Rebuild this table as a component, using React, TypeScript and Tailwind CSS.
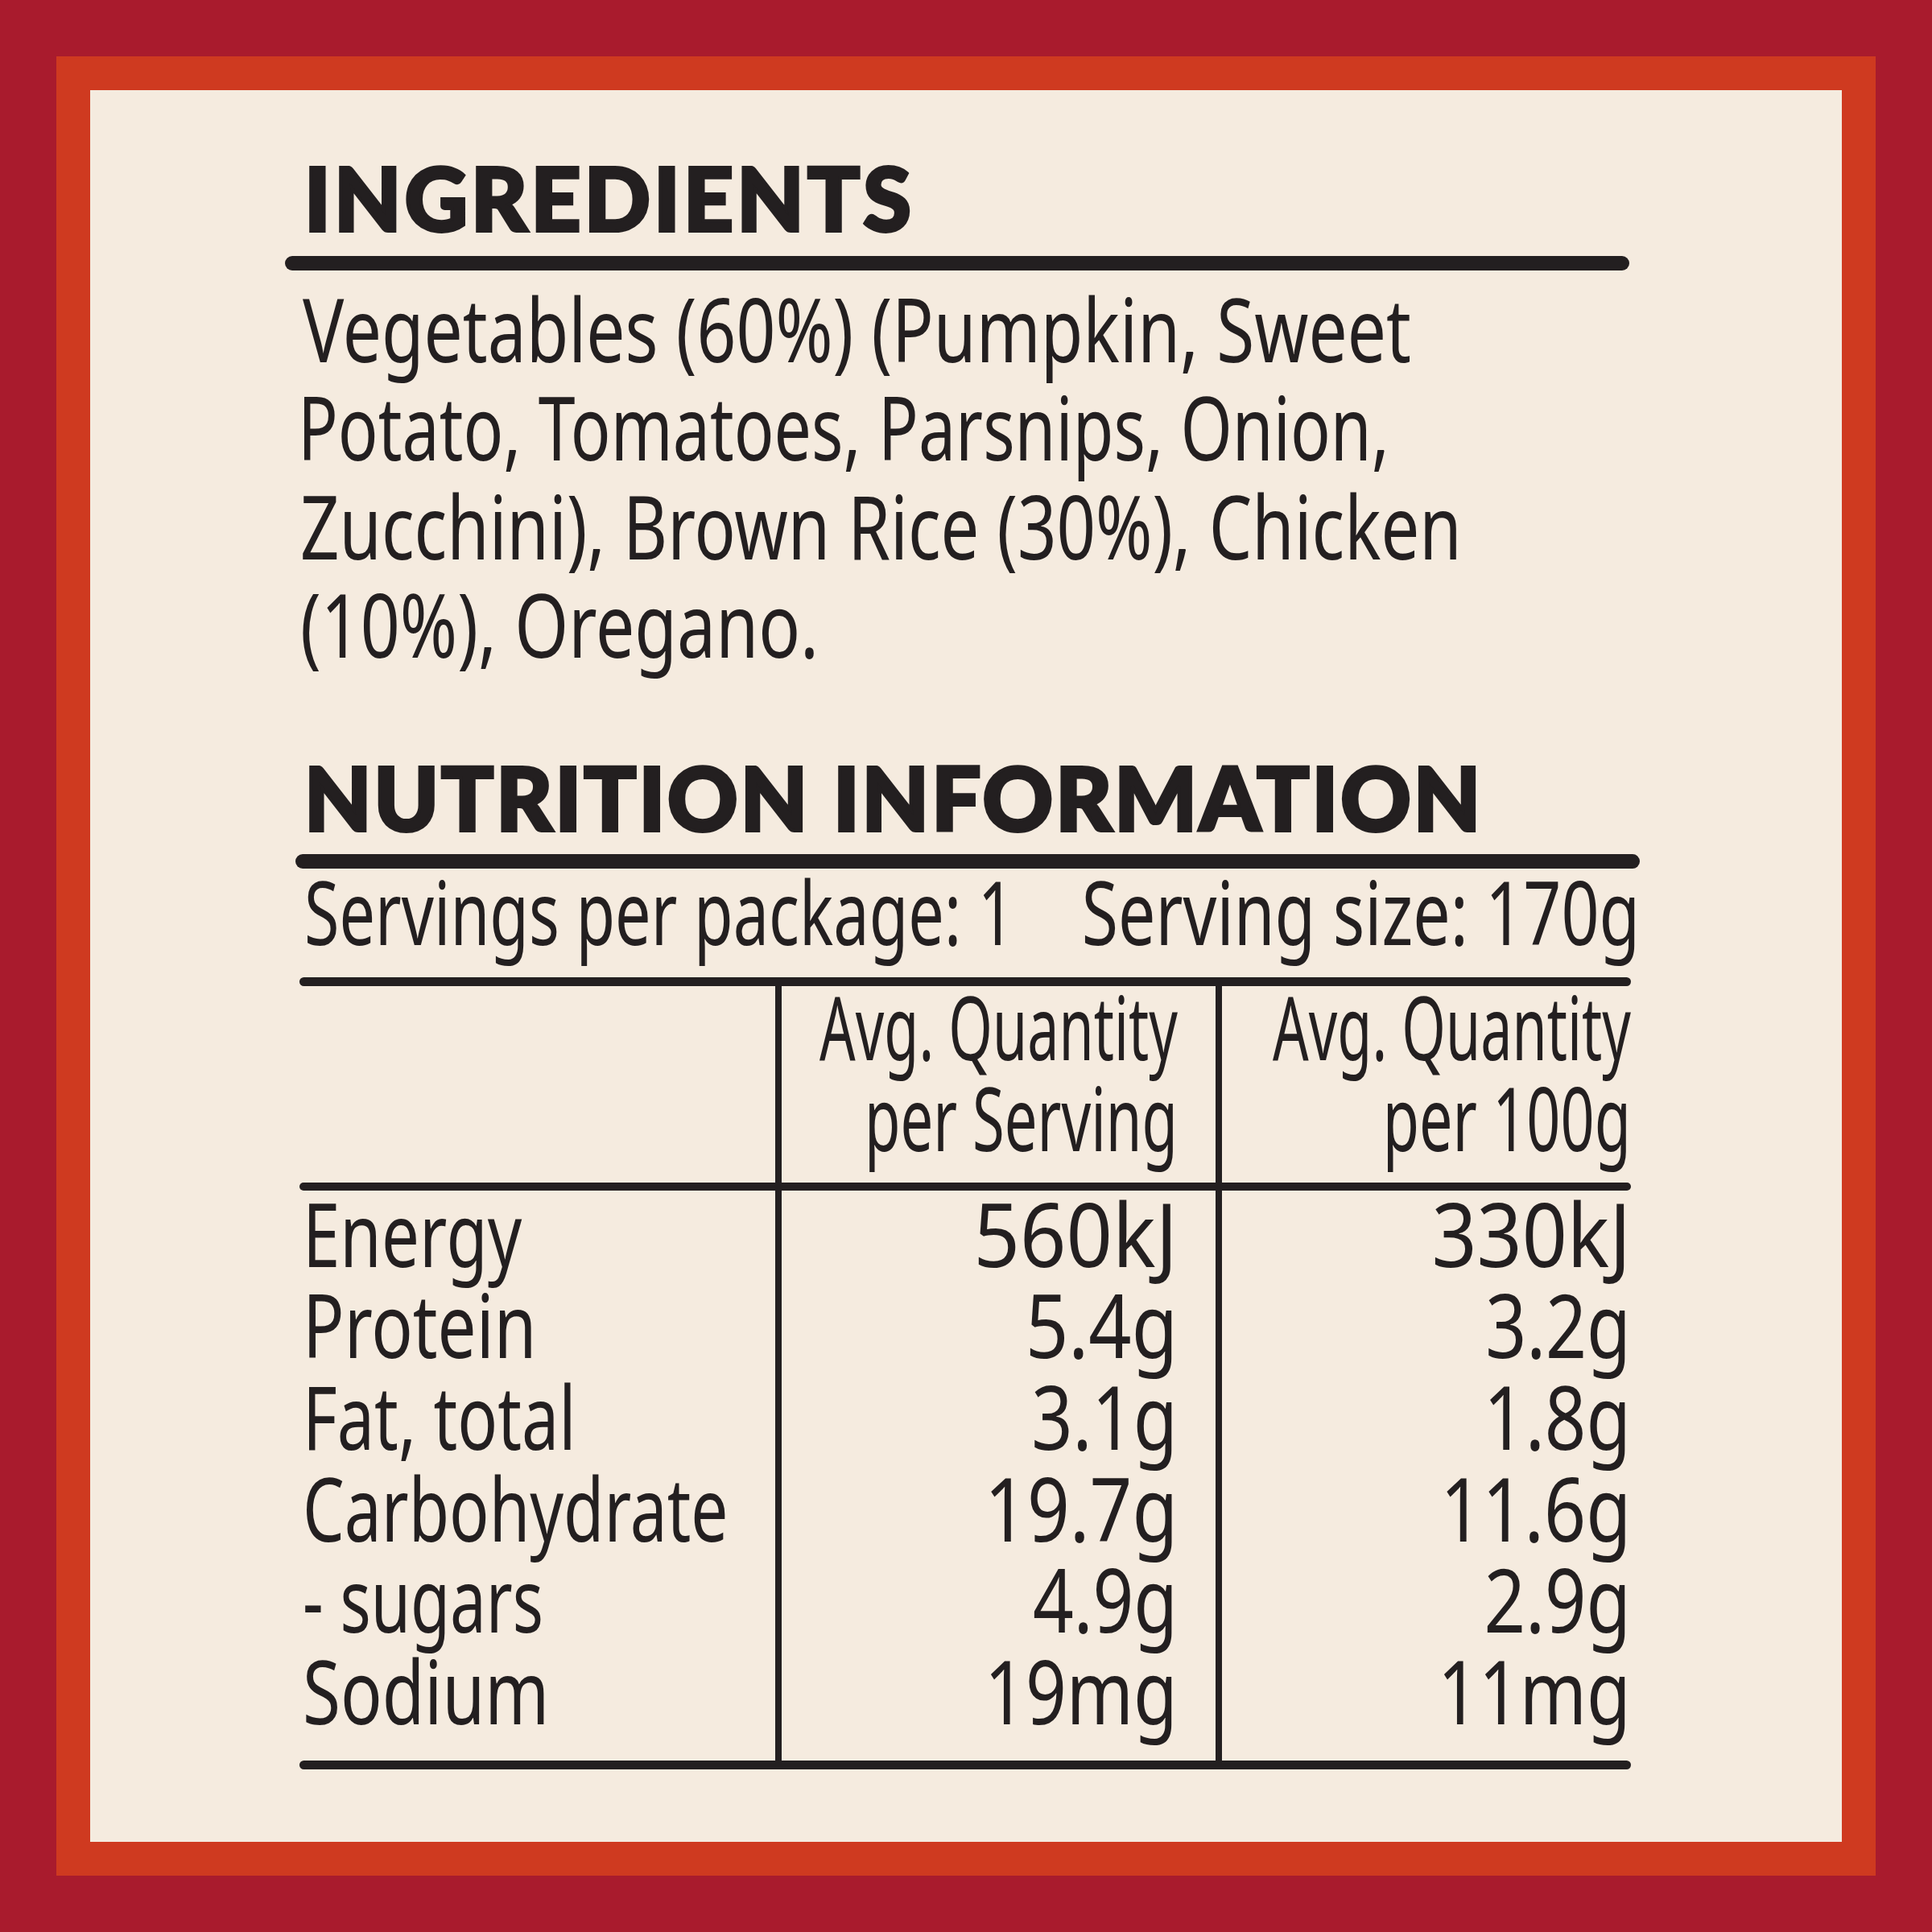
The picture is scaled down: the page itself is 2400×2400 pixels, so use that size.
const ingredientLines = [
  { text: "Vegetables (60%) (Pumpkin, Sweet", cls: "scale-x-[0.785]" },
  { text: "Potato, Tomatoes, Parsnips, Onion,", cls: "-ml-[6px] scale-x-[0.756]" },
  { text: "Zucchini), Brown Rice (30%), Chicken", cls: "-ml-[3px] scale-x-[0.778]" },
  { text: "(10%), Oregano.", cls: "-ml-[3px] scale-x-[0.787]" },
]

const rows = [
  { label: "Energy", lc: "scale-x-[0.765]", serving: "560kJ", sc: "scale-x-[0.922]", per100: "330kJ", pc: "scale-x-[0.9]" },
  { label: "Protein", lc: "scale-x-[0.783]", serving: "5.4g", sc: "scale-x-[0.855]", per100: "3.2g", pc: "scale-x-[0.818]" },
  { label: "Fat, total", lc: "scale-x-[0.757]", serving: "3.1g", sc: "scale-x-[0.822]", per100: "1.8g", pc: "scale-x-[0.828]" },
  { label: "Carbohydrate", lc: "scale-x-[0.752]", serving: "19.7g", sc: "scale-x-[0.848]", per100: "11.6g", pc: "scale-x-[0.837]" },
  { label: "- sugars", lc: "scale-x-[0.732]", serving: "4.9g", sc: "scale-x-[0.815]", per100: "2.9g", pc: "scale-x-[0.826]" },
  { label: "Sodium", lc: "scale-x-[0.785]", serving: "19mg", sc: "scale-x-[0.816]", per100: "11mg", pc: "scale-x-[0.816]" },
]

function Right({ text, cls }: { text: string; cls: string }) {
  return (
    <div className="flex justify-end">
      <span className={`shrink-0 origin-right whitespace-nowrap ${cls}`}>{text}</span>
    </div>
  )
}

function Left({ text, cls }: { text: string; cls: string }) {
  return (
    <div className="flex justify-start">
      <span className={`shrink-0 origin-left whitespace-nowrap ${cls}`}>{text}</span>
    </div>
  )
}

export default function App() {
  return (
    <div className="h-[2400px] w-[2400px] bg-[#A91B2D] p-[70px]">
      <div className="h-full bg-[#CF3A20] p-[42px]">
        <div className="h-full bg-[#F5EBDF] pt-[78px] text-[#231F20]">
          <div className="ml-[242px] w-[1683px]">
            <h1 className="whitespace-nowrap pl-[24px] font-['Lato',sans-serif] text-[108px] font-black leading-[110px] tracking-[4.2px] [-webkit-text-stroke:4px_#231F20]">
              INGREDIENTS
            </h1>
            <div className="mt-[18px] h-[18px] w-[1670px] rounded-full bg-[#231F20]" />

            <div className="mt-[11px] pl-[22px] font-['Noto_Sans',sans-serif] text-[109px] leading-[122.3px]">
              {ingredientLines.map((line) => (
                <Left key={line.text} text={line.text} cls={line.cls} />
              ))}
            </div>

            <h2 className="mt-[99px] whitespace-nowrap pl-[24px] font-['Lato',sans-serif] text-[108px] font-black leading-[110px] tracking-[3px] [-webkit-text-stroke:4px_#231F20]">
              NUTRITION INFORMATION
            </h2>
            <div className="ml-[13px] mt-[16px] h-[18px] w-[1670px] rounded-full bg-[#231F20]" />

            <div className="font-['Noto_Sans',sans-serif] text-[109px] leading-[113.6px]">
              <div className="-mt-[4px] flex pl-[24px]">
                <div className="min-w-0 flex-1">
                  <Left text="Servings per package: 1" cls="scale-x-[0.726]" />
                </div>
                <div className="min-w-0 flex-1">
                  <Right text="Serving size: 170g" cls="scale-x-[0.756]" />
                </div>
              </div>

              <div className="ml-[18px] mt-[25px] grid w-[1654px] grid-cols-[591px_8px_539px_8px_508px] grid-rows-[11px_244px_10px_708px_11px]">
                <div className="col-span-5 col-start-1 row-start-1 rounded-full bg-[#231F20]" />
                <div className="col-start-2 row-span-5 row-start-1 bg-[#231F20]" />
                <div className="col-start-4 row-span-5 row-start-1 bg-[#231F20]" />
                <div className="col-span-5 col-start-1 row-start-3 rounded-full bg-[#231F20]" />
                <div className="col-span-5 col-start-1 row-start-5 rounded-full bg-[#231F20]" />

                <div className="col-start-3 row-start-2 -mt-[7px] pr-[47px]">
                  <Right text="Avg. Quantity" cls="scale-x-[0.642]" />
                  <Right text="per Serving" cls="scale-x-[0.664]" />
                </div>
                <div className="col-start-5 row-start-2 -mt-[7px]">
                  <Right text="Avg. Quantity" cls="scale-x-[0.642]" />
                  <Right text="per 100g" cls="scale-x-[0.676]" />
                </div>

                <div className="col-start-1 row-start-4 -mt-[4px] pl-[4px]">
                  {rows.map((r) => (
                    <Left key={r.label} text={r.label} cls={r.lc} />
                  ))}
                </div>
                <div className="col-start-3 row-start-4 -mt-[4px] pr-[47px]">
                  {rows.map((r) => (
                    <Right key={r.label} text={r.serving} cls={r.sc} />
                  ))}
                </div>
                <div className="col-start-5 row-start-4 -mt-[4px]">
                  {rows.map((r) => (
                    <Right key={r.label} text={r.per100} cls={r.pc} />
                  ))}
                </div>
              </div>
            </div>
          </div>
        </div>
      </div>
    </div>
  )
}
